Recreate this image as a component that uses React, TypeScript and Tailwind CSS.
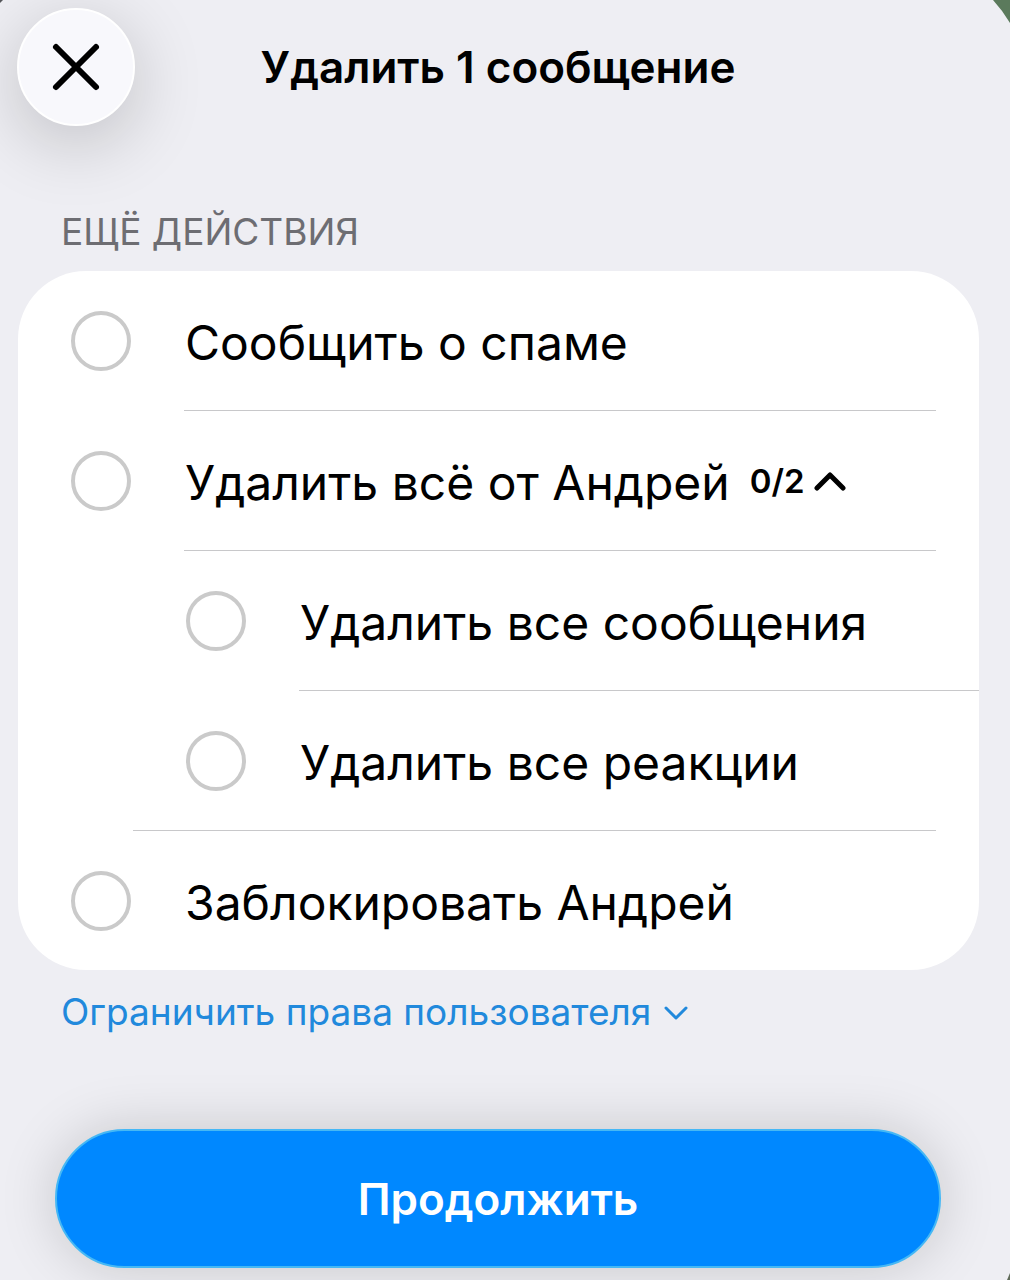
import { useState } from "react";

interface OptionRowProps {
  id: string;
  label: string;
  nested?: boolean;
  divider?: string;
  checked: boolean;
  onChange: (id: string) => void;
  children?: React.ReactNode;
}

function OptionRow({ id, label, nested, divider, checked, onChange, children }: OptionRowProps) {
  return (
    <li>
      <div className={`flex h-[139px] items-center ${nested ? "pl-[168px]" : "pl-[53px]"}`}>
        <input
          id={id}
          type="checkbox"
          checked={checked}
          onChange={() => onChange(id)}
          className="size-[60px] shrink-0 appearance-none rounded-full border-4 border-[#cacaca] bg-white checked:border-[#0088ff] checked:bg-[#0088ff]"
        />
        <label htmlFor={id} className="pt-1 pl-[54px] text-[48px] leading-[60px] whitespace-nowrap">
          {label}
        </label>
        {children}
      </div>
      {divider && <hr className={`h-px border-0 bg-[#c8c8ca] ${divider}`} />}
    </li>
  );
}

export default function App() {
  const [checked, setChecked] = useState<string[]>([]);
  const [open, setOpen] = useState(true);

  const toggle = (id: string) =>
    setChecked((prev) => (prev.includes(id) ? prev.filter((x) => x !== id) : [...prev, id]));

  const count = ["messages", "reactions"].filter((id) => checked.includes(id)).length;
  const row = (id: string) => ({ id, checked: checked.includes(id), onChange: toggle });

  return (
    <div className="relative min-h-screen overflow-hidden bg-[#eeeef3] font-['Inter','Liberation_Sans',sans-serif] text-black">
      {/* chat wallpaper behind the sheet corners */}
      <svg className="absolute top-0 right-0" width="18" height="24" viewBox="0 0 18 24" aria-hidden="true">
        <path d="M1 0H18V23Q11 11 1 0Z" fill="#5b7a5c" />
      </svg>
      <svg className="absolute top-0 left-0" width="3" height="3" viewBox="0 0 3 3" aria-hidden="true">
        <path d="M0 0H3L0 3Z" fill="#55565a" />
      </svg>
      <svg className="absolute right-0 bottom-0" width="4" height="7" viewBox="0 0 4 7" aria-hidden="true">
        <path d="M4 0V7H1Z" fill="#5f6a58" />
      </svg>

      <header className="grid grid-cols-[118px_1fr_118px] items-center pt-2 pr-[31px] pl-[17px]">
        <button
          type="button"
          aria-label="Закрыть"
          className="flex size-[118px] items-center justify-center rounded-full border-2 border-white bg-[#f8f8fc] shadow-[0_16px_72px_rgba(0,0,0,0.2)]"
        >
          <svg width="50" height="50" viewBox="0 0 50 50" fill="none" stroke="currentColor" strokeWidth="6" strokeLinecap="round" aria-hidden="true">
            <path d="M5 5L45 45M45 5L5 45" />
          </svg>
        </button>
        <h1 className="text-center text-[44px] leading-[56px] font-semibold whitespace-nowrap">Удалить 1 сообщение</h1>
      </header>

      <main className="pr-[31px] pl-[18px]">
        <h2 className="pt-[82px] pl-[43px] text-[37px] leading-[48px] text-[#6d6d72]">ЕЩЁ ДЕЙСТВИЯ</h2>

        <ul className="mt-[15px] overflow-hidden rounded-[68px] bg-white">
          <OptionRow {...row("spam")} label="Сообщить о спаме" divider="ml-[166px] mr-[43px]" />
          <OptionRow {...row("all")} label="Удалить всё от Андрей" divider="ml-[166px] mr-[43px]">
            <button
              type="button"
              aria-expanded={open}
              onClick={() => setOpen(!open)}
              className="flex items-center gap-2 pl-5 text-[33px] leading-[44px] font-semibold"
            >
              {count}/2
              <svg
                className={open ? "" : "rotate-180"}
                width="34"
                height="20"
                viewBox="0 0 34 20"
                fill="none"
                stroke="currentColor"
                strokeWidth="5"
                strokeLinecap="round"
                strokeLinejoin="round"
                aria-hidden="true"
              >
                <path d="M4 17L17 4L30 17" />
              </svg>
            </button>
          </OptionRow>
          {open && (
            <>
              <OptionRow {...row("messages")} nested label="Удалить все сообщения" divider="ml-[281px]" />
              <OptionRow {...row("reactions")} nested label="Удалить все реакции" divider="ml-[115px] mr-[43px]" />
            </>
          )}
          <OptionRow {...row("block")} label="Заблокировать Андрей" />
        </ul>

        <button type="button" className="mt-[18px] ml-[43px] flex items-center gap-3 text-[37px] leading-[48px] text-[#2189dc]">
          Ограничить права пользователя
          <svg width="26" height="16" viewBox="0 0 26 16" fill="none" stroke="currentColor" strokeWidth="3" strokeLinecap="round" strokeLinejoin="round" aria-hidden="true">
            <path d="M3 4L13 14L23 4" />
          </svg>
        </button>
      </main>

      <footer className="pt-[93px] pr-[69px] pb-3 pl-[55px]">
        <button
          type="button"
          className="h-[139px] w-full rounded-full border-2 border-[#45b8f5] bg-[#0088ff] text-[44px] leading-[56px] font-semibold text-white shadow-[0_0_56px_rgba(0,0,0,0.17)]"
        >
          Продолжить
        </button>
      </footer>
    </div>
  );
}
